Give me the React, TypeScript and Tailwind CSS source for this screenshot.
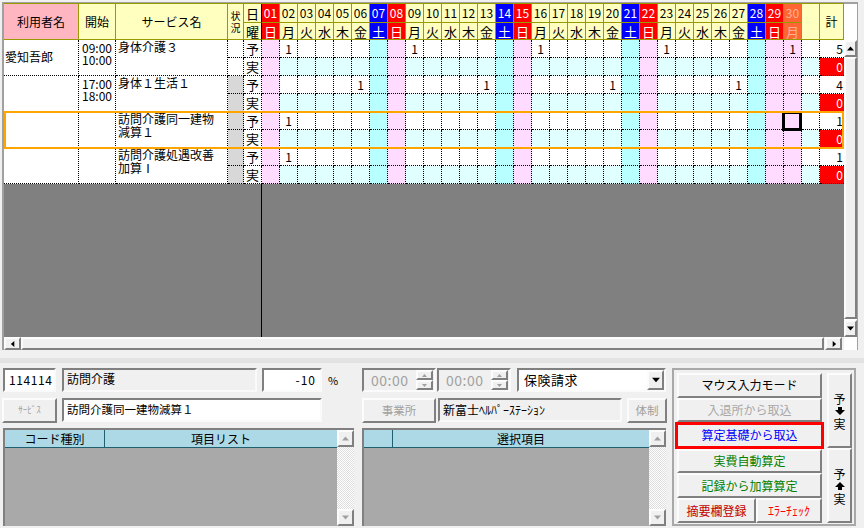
import React from 'react';

const days = Array.from({ length: 30 }, (_, i) => i + 1);
const weekNames = ['日', '月', '火', '水', '木', '金', '土'];

const rows = [
  { name: '愛知吾郎', start: '09:00', end: '10:00', service: ['身体介護３'], plan: [2, 9, 16, 23, 30], total: 5, status: false },
  { name: '', start: '17:00', end: '18:00', service: ['身体１生活１'], plan: [6, 13, 20, 27], total: 4, status: true },
  { name: '', start: '', end: '', service: ['訪問介護同一建物', '減算１'], plan: [2], total: 1, status: true },
  { name: '', start: '', end: '', service: ['訪問介護処遇改善', '加算Ⅰ'], plan: [2], total: 1, status: true },
];

const raised = 'border-2 border-t-[#fcfcfc] border-l-[#fcfcfc] border-r-[#808080] border-b-[#808080] bg-[#f0f0f0]';
const sunken = 'border-2 border-t-[#808080] border-l-[#808080] border-r-[#fafafa] border-b-[#fafafa]';
const dots = 'border-r border-b border-dotted border-black';
const olive = 'border-r border-b border-[#999900]';

const headClass = (d: number) => {
  if (d === 30) return 'bg-[#ff6633] text-[#ffb090]';
  if (d % 7 === 1) return 'bg-[#ff0000] text-white';
  if (d % 7 === 0) return 'bg-[#0000ff] text-white';
  return 'bg-[#ffffc0] text-black';
};

const bodyClass = (d: number, actual: boolean) => {
  if (d === 30 || d % 7 === 1) return 'bg-[#ffdcff]';
  if (d % 7 === 0) return 'bg-[#b8ffff]';
  return actual ? 'bg-[#e0ffff]' : 'bg-white';
};

const Arrow = ({ dir, color = '#000000', size = 7 }: { dir: 'up' | 'down' | 'left' | 'right'; color?: string; size?: number }) => {
  const points = { up: '3.5,1.5 7,5.5 0,5.5', down: '0,1.5 7,1.5 3.5,5.5', left: '5,0 5,7 1,3.5', right: '2,0 2,7 6,3.5' }[dir];
  return (
    <svg width={size} height={size} viewBox="0 0 7 7">
      <polygon points={points} fill={color} />
    </svg>
  );
};

// the thick arrow between 予 and 実
const BlockArrow = ({ dir }: { dir: 'up' | 'down' }) => (
  <svg width="10" height="10" viewBox="0 0 10 10" className="my-[1px]">
    <polygon points={dir === 'up' ? '5,1 10,6 7,6 7,9 3,9 3,6 0,6' : '3,1 7,1 7,4 10,4 5,9 0,4 3,4'} fill="#000000" />
  </svg>
);

const ListBox = ({ widthClass, firstClass, first, second }: { widthClass: string; firstClass: string; first: string; second: string }) => (
  <div className={`${widthClass} h-[98px] flex border-t-2 border-l-2 border-[#808080]`}>
    <div className="flex-1 flex flex-col min-w-0">
      <div className="h-[18px] flex bg-[#add8e6] border-b border-[#1f5f70] text-[12px] leading-[17px] text-black">
        <div className={`${firstClass} text-center border-r border-[#1f5f70]`}>{first}</div>
        <div className="flex-1 text-center">{second}</div>
      </div>
      <div className="flex-1 bg-[#a9a9a9]" />
    </div>
    <div className="w-[17px] flex flex-col bg-[repeating-conic-gradient(#dddddd_0_25%,#ffffff_0_50%)] bg-[length:2px_2px]">
      <div className={`h-[17px] ${raised} flex items-center justify-center`}><Arrow dir="up" color="#a0a0a0" /></div>
      <div className="flex-1" />
      <div className={`h-[17px] ${raised} flex items-center justify-center`}><Arrow dir="down" color="#a0a0a0" /></div>
    </div>
  </div>
);

const Spinner = () => (
  <div className={`w-[74px] h-[24px] ${sunken} flex items-center`}>
    <span className="flex-1 text-[14px] leading-none text-[#a0a0a0] pl-[7px] tracking-[0.5px]">00:00</span>
    <div className="w-[17px] flex flex-col mr-[1px]">
      <div className={`h-[10px] ${raised} border flex items-center justify-center`}><Arrow dir="up" color="#a0a0a0" size={5} /></div>
      <div className={`h-[10px] ${raised} border flex items-center justify-center`}><Arrow dir="down" color="#a0a0a0" size={5} /></div>
    </div>
  </div>
);

export default function App() {
  return (
    <div className="w-[864px] h-[528px] overflow-hidden bg-[#f0f0f0] font-['Noto_Sans_CJK_JP','Noto_Sans',sans-serif] text-black">
      {/* schedule grid */}
      <div className="ml-[2px] mt-[2px] w-[856px] h-[348px] flex border-t-2 border-l-2 border-r border-[#a0a0a0] bg-white">
        <div className="w-[840px] flex flex-col">
          <div className="relative grid grid-cols-[75px_37px_112px_16px_18px_repeat(30,18px)_18px_24px] grid-rows-[19px_17px_repeat(8,18px)] border-t border-[#999900] -mt-px">
            <div className={`row-span-2 ${olive} bg-[#ffb6c1] flex items-center justify-center text-[12px]`}>利用者名</div>
            <div className={`row-span-2 ${olive} bg-[#ffffc0] flex items-center justify-center text-[12px]`}>開始</div>
            <div className={`row-span-2 ${olive} bg-[#ffffc0] flex items-center justify-center text-[12px]`}>サービス名</div>
            <div className={`row-span-2 ${olive} bg-[#ffffc0] flex items-center justify-center text-center text-[10px] leading-[12px]`}>状<br />況</div>
            <div className="border-r border-r-black border-b border-b-[#999900] bg-[#ffffc0] flex items-center justify-center text-[13px] leading-none">日</div>
            {days.map(d => (
              <div key={d} className={`${olive} ${headClass(d)} flex items-center justify-center text-[12px] leading-none`}>
                {String(d).padStart(2, '0')}
              </div>
            ))}
            <div className={`row-span-2 ${olive} bg-[#ffffc0]`} />
            <div className={`row-span-2 ${olive} bg-[#ffffc0] flex items-center justify-center text-[12px]`}>計</div>

            <div className="border-r border-r-black border-b border-b-[#999900] bg-[#ffffc0] flex items-center justify-center text-[13px] leading-none">曜</div>
            {days.map(d => (
              <div key={d} className={`${olive} ${headClass(d)} flex items-center justify-center text-[13px] leading-none`}>
                {weekNames[(d - 1) % 7]}
              </div>
            ))}

            {rows.map((row, r) => (
              <React.Fragment key={r}>
                <div className={`row-span-2 ${dots} pl-[1px] pt-[6px] text-[12px] leading-[22px] whitespace-nowrap`}>{row.name}</div>
                <div className={`row-span-2 ${dots} pt-[2px] text-center text-[12px] leading-[12px]`}>
                  {row.start}<br />{row.end}
                </div>
                <div className={`row-span-2 ${dots} pl-[2px] text-[12px] leading-[13px] whitespace-nowrap`}>
                  {row.service.map(s => <div key={s}>{s}</div>)}
                </div>
                <div className={`${dots} ${row.status ? 'bg-[#d8d8d8]' : 'bg-white'}`} />
                <div className="border-r border-r-black border-b border-dotted border-b-black flex items-center justify-center text-[13px] leading-none">予</div>
                {days.map(d => (
                  <div key={d} className={`relative ${dots} ${bodyClass(d, false)} text-center text-[12px] leading-[17px]`}>
                    {row.plan.includes(d) ? '1' : ''}
                    {r === 2 && d === 30 && <div className="absolute z-10 -left-[2px] -top-px w-[20px] h-[20px] border-[3px] border-black" />}
                  </div>
                ))}
                <div className={`${dots} bg-white`} />
                <div className="border-b border-dotted border-black bg-white text-right text-[12px] leading-[17px] pr-[1px]">{row.total}</div>

                <div className={`${dots} ${row.status ? 'bg-[#d8d8d8]' : 'bg-white'}`} />
                <div className="border-r border-r-black border-b border-dotted border-b-black flex items-center justify-center text-[13px] leading-none">実</div>
                {days.map(d => (
                  <div key={d} className={`${dots} ${bodyClass(d, true)}`} />
                ))}
                <div className={`${dots} bg-[#e0ffff]`} />
                <div className="border-b border-dotted border-black bg-[#ff0000] text-white text-right text-[12px] leading-[17px] pr-[1px]">0</div>
              </React.Fragment>
            ))}

            {/* selected row outline */}
            <div className="absolute z-20 left-0 top-[107px] w-[840px] h-[38px] border-2 border-[#ffa500] pointer-events-none" />
          </div>

          <div className="h-[153px] bg-[#808080]">
            <div className="w-[258px] h-full border-r border-black" />
          </div>

          <div className="h-[13px] flex bg-[#f0f0f0]">
            <div className={`w-[17px] ${raised} flex items-center justify-center`}><Arrow dir="left" size={6} /></div>
            <div className={`w-[803px] ${raised}`} />
            <div className={`w-[17px] ml-[1px] ${raised} flex items-center justify-center`}><Arrow dir="right" size={6} /></div>
          </div>
        </div>

        <div className="w-[13px] flex flex-col bg-white">
          <div className="h-[36px]" />
          <div className={`h-[17px] ${raised} flex items-center justify-center`}><Arrow dir="up" /></div>
          <div className={`h-[262px] ${raised}`} />
          <div className={`h-[17px] mt-[1px] ${raised} flex items-center justify-center`}><Arrow dir="down" /></div>
        </div>
      </div>

      <div className="h-[8px]" />
      <div className="h-[5px] bg-[#e3e3e3]" />

      {/* lower form */}
      <div className="flex pt-[5px] pl-[3px]">
        <div className="w-[350px] flex flex-col">
          <div className="flex h-[24px] items-center">
            <div className={`w-[53px] h-[24px] ${sunken} bg-white text-[12px] leading-[20px] pl-[4px] tracking-[0.6px]`}>114114</div>
            <div className={`w-[195px] h-[24px] ml-[6px] ${sunken} text-[12px] leading-[18px] pl-[3px]`}>訪問介護</div>
            <div className={`w-[60px] h-[24px] ml-[5px] ${sunken} bg-white text-[12px] leading-[20px] text-right pr-[4px] tracking-[1px]`}>-10</div>
            <span className="ml-[6px] text-[11px]">%</span>
          </div>
          <div className="flex h-[25px] mt-[6px]">
            <div className={`w-[55px] -ml-px ${raised} text-[9px] leading-[20px] text-center text-[#a0a0a0]`}>ｻｰﾋﾞｽ</div>
            <div className={`w-[260px] h-[24px] ml-[5px] ${sunken} bg-white text-[11.5px] leading-[19px] pl-[3px] whitespace-nowrap`}>訪問介護同一建物減算１</div>
          </div>
          <div className="mt-[5px]">
            <ListBox widthClass="w-[351px]" firstClass="w-[100px]" first="コード種別" second="項目リスト" />
          </div>
        </div>

        <div className="w-[305px] ml-[9px] flex flex-col">
          <div className="flex h-[24px]">
            <Spinner />
            <div className="ml-[1px]"><Spinner /></div>
            <div className={`w-[149px] h-[24px] ml-[6px] ${sunken} bg-white flex`}>
              <span className="flex-1 text-[13px] leading-[20px] pl-[5px] tracking-[0.5px]">保険請求</span>
              <div className={`w-[17px] ${raised} flex items-center justify-center`}><Arrow dir="down" size={8} /></div>
            </div>
          </div>
          <div className="flex h-[25px] mt-[6px]">
            <div className={`w-[74px] ${raised} text-[11.5px] leading-[20px] text-center text-[#a0a0a0]`}>事業所</div>
            <div className={`w-[184px] h-[24px] ml-[2px] ${sunken} text-[12px] leading-[19px] pl-[3px] whitespace-nowrap`}>新富士ﾍﾙﾊﾟｰｽﾃｰｼｮﾝ</div>
            <div className={`w-[40px] ml-[5px] ${raised} text-[11.5px] leading-[20px] text-center text-[#a0a0a0]`}>体制</div>
          </div>
          <div className="mt-[5px]">
            <ListBox widthClass="w-[304px]" firstClass="w-[29px]" first="" second="選択項目" />
          </div>
        </div>

        <div className="w-[184px] h-[158px] ml-[5px] border-2 border-[#a8a8a8] flex pt-[3px] pl-[3px]">
          <div className="w-[145px] flex flex-col text-[12px] text-center">
            <div className={`h-[25px] ${raised} leading-[20px]`}>マウス入力モード</div>
            <div className={`h-[24px] ${raised} leading-[20px] text-[#a8a8a8]`}>入退所から取込</div>
            <div className="h-[27px] -mx-[2px] border-[3px] border-[#ff0000] bg-[#f0f0f0] leading-[20px] text-[#0000ff]">算定基礎から取込</div>
            <div className={`h-[24px] ${raised} leading-[20px] text-[#008000]`}>実費自動算定</div>
            <div className={`h-[25px] ${raised} leading-[21px] text-[#008000]`}>記録から加算算定</div>
            <div className="flex h-[25px]">
              <div className={`w-[79px] ${raised} leading-[21px] text-[#c00000]`}>摘要欄登録</div>
              <div className={`flex-1 ${raised} leading-[21px] text-[#ff0000]`}>ｴﾗｰﾁｪｯｸ</div>
            </div>
          </div>
          <div className="w-[25px] ml-[5px] flex flex-col text-[12px]">
            <div className={`h-[75px] ${raised} flex flex-col items-center justify-center leading-[13px]`}>
              <span>予</span>
              <BlockArrow dir="down" />
              <span>実</span>
            </div>
            <div className={`h-[75px] ${raised} flex flex-col items-center justify-center leading-[13px]`}>
              <span>予</span>
              <BlockArrow dir="up" />
              <span>実</span>
            </div>
          </div>
        </div>
      </div>
    </div>
  );
}
